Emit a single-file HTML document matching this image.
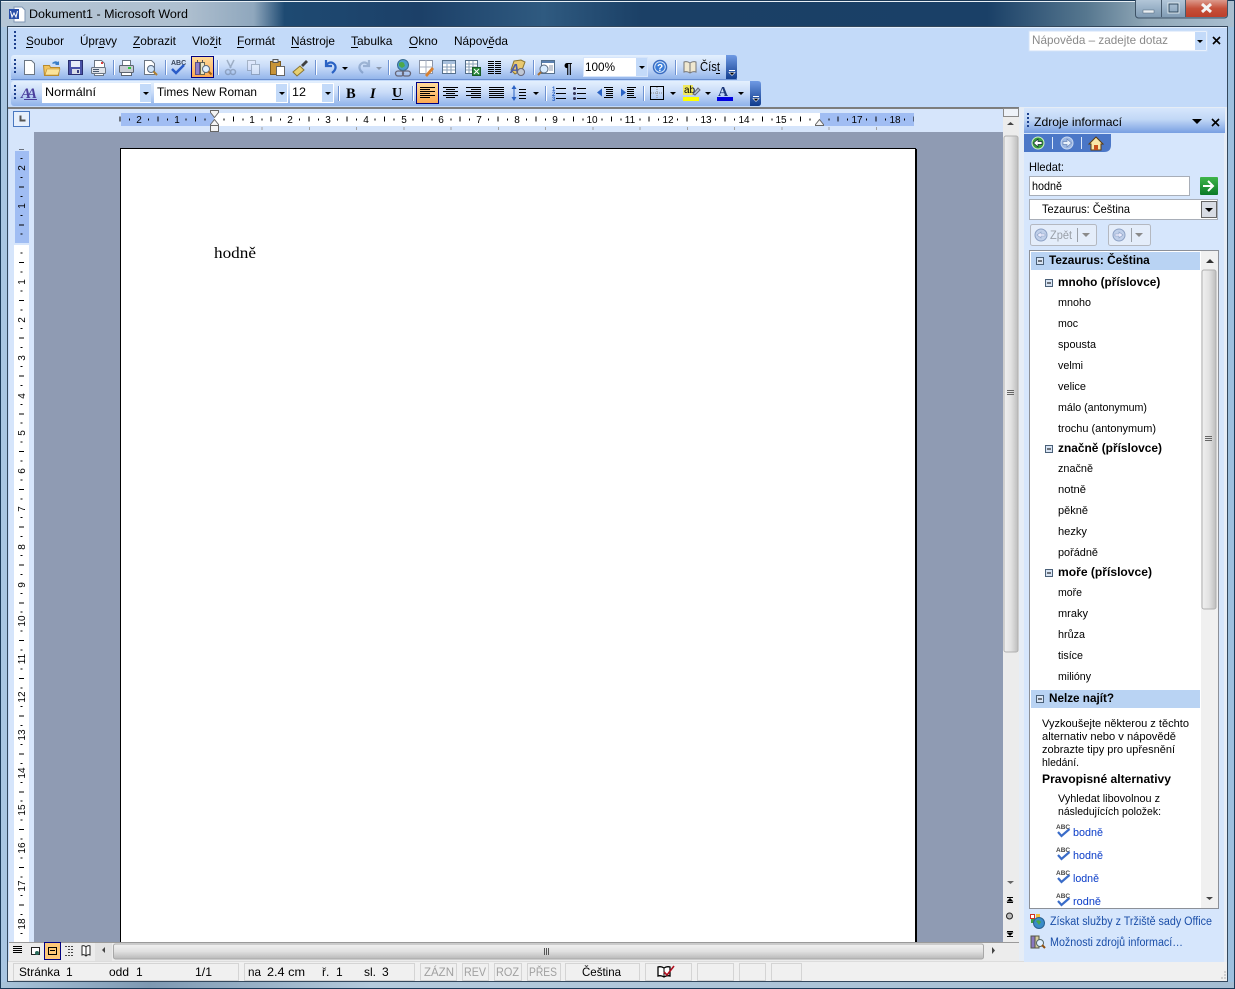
<!DOCTYPE html>
<html lang="cs"><head><meta charset="utf-8"><title>Dokument1 - Microsoft Word</title>
<style>
html,body{margin:0;padding:0;width:1235px;height:989px;overflow:hidden;background:#1a3f66}
svg{display:block}
text{font-family:"Liberation Sans","DejaVu Sans",sans-serif;font-size:12px;fill:#000;white-space:pre}
.b{font-weight:bold}
.l{fill:#0a3cc8}
.m{font-size:10px;text-anchor:middle}
.g{fill:#a0a0a0}
.r{font-size:11px}
.bb{font-weight:bold;font-size:11.800px}
</style></head><body>
<svg xmlns="http://www.w3.org/2000/svg" width="1235" height="989" viewBox="0 0 1235 989">
<defs>
<linearGradient id="tt" x1="0" x2="1" y1="0" y2="0">
<stop offset="0" stop-color="#b5c6d6"/><stop offset=".15" stop-color="#aebfcf"/><stop offset=".205" stop-color="#8fa7bd"/><stop offset=".23" stop-color="#1e4a72"/><stop offset=".34" stop-color="#1c4068"/><stop offset=".44" stop-color="#2f5a80"/><stop offset=".52" stop-color="#1b4066"/><stop offset=".8" stop-color="#1a4067"/><stop offset=".88" stop-color="#56778f"/><stop offset=".93" stop-color="#91a8b8"/><stop offset="1" stop-color="#a9bfd0"/></linearGradient>
<linearGradient id="tb" x1="0" x2="0" y1="0" y2="1"><stop offset="0" stop-color="#e4f0fe"/><stop offset=".45" stop-color="#c9dcf8"/><stop offset="1" stop-color="#90b2ea"/></linearGradient>
<linearGradient id="ch" x1="0" x2="0" y1="0" y2="1"><stop offset="0" stop-color="#6f9ae4"/><stop offset="1" stop-color="#0f3a8c"/></linearGradient>
<linearGradient id="hl" x1="0" x2="0" y1="0" y2="1"><stop offset="0" stop-color="#ffdc9c"/><stop offset="1" stop-color="#fda850"/></linearGradient>
<linearGradient id="tp" x1="0" x2="0" y1="0" y2="1"><stop offset="0" stop-color="#d6e6fc"/><stop offset=".45" stop-color="#c2d8f6"/><stop offset="1" stop-color="#789fe2"/></linearGradient>
<linearGradient id="sv" x1="0" x2="1" y1="0" y2="0"><stop offset="0" stop-color="#f0f0f0"/><stop offset=".5" stop-color="#e2e2e2"/><stop offset="1" stop-color="#bdbdbd"/></linearGradient>
<linearGradient id="sh" x1="0" x2="0" y1="0" y2="1"><stop offset="0" stop-color="#f2f2f2"/><stop offset=".5" stop-color="#e0e0e0"/><stop offset="1" stop-color="#b8b8b8"/></linearGradient>
<linearGradient id="bt" x1="0" x2="0" y1="0" y2="1"><stop offset="0" stop-color="#b8cbdc"/><stop offset=".5" stop-color="#9ab2c8"/><stop offset="1" stop-color="#7f9ab2"/></linearGradient>
<linearGradient id="cl" x1="0" x2="0" y1="0" y2="1"><stop offset="0" stop-color="#dc9a8c"/><stop offset=".5" stop-color="#c5503a"/><stop offset="1" stop-color="#bd3f2a"/></linearGradient>
<linearGradient id="go" x1="0" x2="0" y1="0" y2="1"><stop offset="0" stop-color="#3fb54a"/><stop offset="1" stop-color="#0b7a26"/></linearGradient>
<linearGradient id="bb" x1="0" x2="1" y1="0" y2="0"><stop offset="0" stop-color="#a9c4da"/><stop offset=".12" stop-color="#7e99b2"/><stop offset=".3" stop-color="#b4cadc"/><stop offset="1" stop-color="#a5bed3"/></linearGradient>
</defs>

<!-- window frame -->
<rect width="1235" height="989" fill="#1c3a58"/>
<rect x="1" y="1" width="1233" height="26" fill="url(#tt)"/>
<rect x="1" y="1" width="1134" height="1" fill="#e8f0f6"/>
<rect x="1" y="27" width="7" height="955" fill="#a9c6e2"/>
<rect x="1228" y="27" width="6" height="955" fill="#9dc0df"/>
<rect x="1" y="982" width="1233" height="6" fill="url(#bb)"/>
<rect x="7" y="26" width="1221" height="956" fill="#33475c"/>

<!-- client -->
<rect x="8" y="27" width="1219" height="954" fill="#c3daf9"/>
<rect x="8" y="27" width="1219" height="1" fill="#e2eefc"/>
<rect x="8" y="107" width="1011" height="2" fill="#7d7d7d"/>
<rect x="1019" y="107" width="208" height="855" fill="#e6edf6"/>
<rect x="9" y="109" width="1010" height="834" fill="#d6e5fb"/>

<!-- title text + icon -->
<g transform="translate(9,7)">
<path d="M5 0h8l3 3v12H5z" fill="#fff" stroke="#7f96b4"/><rect x="0" y="2" width="10" height="10" fill="#2a4fa8"/><path d="M1.500 4l1.500 6 2-4 2 4 1.500-6" fill="none" stroke="#fff"/>
</g>
<text x="29" y="18" textLength="159" lengthAdjust="spacingAndGlyphs" style="font-size:12.300px">Dokument1 - Microsoft Word</text>

<!-- window buttons -->
<rect x="1135.500" y="-2" width="92" height="20" rx="3" fill="url(#bt)" stroke="#3e5266"/>
<rect x="1161" y="0" width="1" height="17" fill="#46596c"/>
<rect x="1185" y="0" width="1" height="17" fill="#46596c"/>
<path d="M1186 0h41v15q0 2-3 2h-38z" fill="url(#cl)"/>
<rect x="1143" y="10" width="11" height="3" fill="#e9eef2" stroke="#50657a" stroke-width=".5"/>
<rect x="1169" y="4" width="9" height="8" fill="none" stroke="#2f4a60" stroke-width="1"/><rect x="1168" y="3" width="11" height="10" fill="none" stroke="#dce7ee" stroke-width="1"/>
<path d="M1202 4l9 8M1211 4l-9 8" stroke="#f4f4f4" stroke-width="3"/>

<!-- menu bar -->
<path d="M15 31v2M15 35v2M15 39v2M15 43v2M15 47v2" stroke="#1c3f8c" stroke-width="2"/>
<g>
<text x="26" y="45" textLength="38" lengthAdjust="spacingAndGlyphs">Soubor</text><rect x="26" y="47" width="7" height="1"/>
<text x="80" y="45" textLength="37" lengthAdjust="spacingAndGlyphs">Úpravy</text><rect x="98" y="47" width="6" height="1"/>
<text x="133" y="45" textLength="43" lengthAdjust="spacingAndGlyphs">Zobrazit</text><rect x="133" y="47" width="7" height="1"/>
<text x="192" y="45">Vložit</text><rect x="214" y="47" width="3" height="1"/>
<text x="237" y="45">Formát</text><rect x="237" y="47" width="7" height="1"/>
<text x="291" y="45" textLength="44" lengthAdjust="spacingAndGlyphs">Nástroje</text><rect x="291" y="47" width="8" height="1"/>
<text x="351" y="45">Tabulka</text><rect x="351" y="47" width="7" height="1"/>
<text x="409" y="45">Okno</text><rect x="409" y="47" width="8" height="1"/>
<text x="454" y="45" textLength="54" lengthAdjust="spacingAndGlyphs">Nápověda</text><rect x="487" y="47" width="6" height="1"/>
</g>
<rect x="1029" y="31" width="178" height="20" fill="#fff" stroke="#d2e2f8"/>
<rect x="1195" y="32" width="11" height="18" fill="#c3daf9"/>
<text x="1032" y="44" textLength="136" lengthAdjust="spacingAndGlyphs" style="font-size:11.600px;fill:#8a8a8a">Nápověda – zadejte dotaz</text>
<path d="M1197 40h6l-3 3z"/>
<path d="M1213 37l7 7M1220 37l-7 7" stroke="#000" stroke-width="1.600"/>

<!-- toolbar 1 -->
<rect x="11" y="55" width="726" height="25" rx="3" fill="url(#tb)"/>
<path d="M726 55h8q3 0 3 3v19q0 3-3 3h-8z" fill="url(#ch)"/>
<rect x="729" y="70" width="6" height="1" fill="#fff"/><path d="M729 72.500h6l-3 3z" fill="#000" stroke="#fff" stroke-width=".6"/>
<path d="M15 59v2M15 63v2M15 67v2M15 71v2" stroke="#1c3f8c" stroke-width="2"/>
<rect x="11" y="79" width="726" height="1" fill="#6a8fd0"/>
<!-- toolbar 2 -->
<rect x="11" y="81" width="750" height="25" rx="3" fill="url(#tb)"/>
<path d="M750 81h8q3 0 3 3v19q0 3-3 3h-8z" fill="url(#ch)"/>
<rect x="753" y="96" width="6" height="1" fill="#fff"/><path d="M753 98.500h6l-3 3z" fill="#000" stroke="#fff" stroke-width=".6"/>
<path d="M15 85v2M15 89v2M15 93v2M15 97v2" stroke="#1c3f8c" stroke-width="2"/>

<!-- separators -->
<g fill="#6f93d2">
<rect x="113" y="60" width="1" height="15"/><rect x="165" y="60" width="1" height="15"/><rect x="217" y="60" width="1" height="15"/><rect x="315" y="60" width="1" height="15"/><rect x="388" y="60" width="1" height="15"/><rect x="533" y="60" width="1" height="15"/><rect x="675" y="60" width="1" height="15"/>
<rect x="338" y="86" width="1" height="15"/><rect x="412" y="86" width="1" height="15"/><rect x="545" y="86" width="1" height="15"/><rect x="643" y="86" width="1" height="15"/>
</g>
<g fill="#fff">
<rect x="114" y="60" width="1" height="15"/><rect x="166" y="60" width="1" height="15"/><rect x="218" y="60" width="1" height="15"/><rect x="316" y="60" width="1" height="15"/><rect x="389" y="60" width="1" height="15"/><rect x="534" y="60" width="1" height="15"/><rect x="676" y="60" width="1" height="15"/>
<rect x="339" y="86" width="1" height="15"/><rect x="413" y="86" width="1" height="15"/><rect x="546" y="86" width="1" height="15"/><rect x="644" y="86" width="1" height="15"/>
</g>

<!-- highlighted buttons -->
<rect x="191.500" y="56.500" width="22" height="21" fill="url(#hl)" stroke="#000080"/>
<rect x="416.500" y="82.500" width="22" height="21" fill="url(#hl)" stroke="#000080"/>

<!-- toolbar 1 icons -->
<path d="M24.500 60.500h7l3 3v11h-10z" fill="#fff" stroke="#6b7684"/>
<path d="M44.500 75.500l-1-10h6l1 2h9l-1 8z" fill="#f2c45e" stroke="#b98a2d"/><path d="M45 75l2-6h13l-2 6z" fill="#fbe39a" stroke="#b98a2d" stroke-width=".6"/><path d="M52 63q3-3 6-1l1-1v4h-4l1-1q-2-1-3 0" fill="#3a7ec8"/>
<rect x="68.500" y="60.500" width="14" height="14" fill="#4a52a8" stroke="#2a2f70"/><rect x="71" y="61" width="9" height="6" fill="#e8ecf8"/><rect x="72" y="69" width="8" height="5" fill="#d8dce8"/><rect x="77" y="70" width="2" height="3" fill="#3a3f80"/>
<path d="M94.500 60.500h7l3 3v4h-10z" fill="#fff" stroke="#6b7684"/><rect x="91.500" y="67.500" width="14" height="6" rx="1" fill="#dfe3ea" stroke="#6b7684"/><rect x="94.500" y="73.500" width="9" height="2" fill="#fff" stroke="#6b7684"/><rect x="101" y="62" width="2" height="2" fill="#d84040"/><rect x="93" y="69" width="6" height="1" fill="#4a5a70"/><rect x="93" y="71" width="6" height="1" fill="#4a5a70"/>
<path d="M122.500 60.500h8v5h-8z" fill="#fff" stroke="#6b7684"/><rect x="119.500" y="65.500" width="14" height="7" rx="1" fill="#c8ccd4" stroke="#5c6470"/><rect x="121.500" y="72.500" width="10" height="3" fill="#fff" stroke="#5c6470"/><rect x="128" y="67" width="3" height="2" fill="#2cc83c"/>
<path d="M144.500 60.500h7l3 3v11h-10z" fill="#fff" stroke="#6b7684"/><circle cx="151" cy="69" r="3.500" fill="#d0e4f8" stroke="#5a6a80"/><path d="M153.500 71.500l3.500 3.500" stroke="#b08030" stroke-width="2"/>
<text x="171" y="65" style="font-size:7px;font-weight:bold;fill:#39465c">ABC</text>
<path d="M172 69l4 4 8-8" fill="none" stroke="#2a5cc8" stroke-width="2.500"/>
<rect x="195.500" y="62.500" width="4" height="12" fill="#8f7fc8" stroke="#5a4e90"/><rect x="200.500" y="62.500" width="4" height="12" fill="#e8e4c8" stroke="#6a6a50"/><circle cx="206" cy="69" r="3.500" fill="#e0f0ff" stroke="#5a6a80"/><path d="M208.500 71.500l3 3" stroke="#a86010" stroke-width="2"/><rect x="197" y="60" width="1" height="3" fill="#555"/><rect x="202" y="60" width="1" height="3" fill="#555"/>
<g opacity=".42">
<path d="M227 60l4 8M234 60l-4 8" stroke="#5a6a80" stroke-width="1.500"/><circle cx="228" cy="72" r="2.500" fill="none" stroke="#5a6a80" stroke-width="1.500"/><circle cx="233" cy="72" r="2.500" fill="none" stroke="#5a6a80" stroke-width="1.500"/>
<rect x="247.500" y="60.500" width="8" height="10" fill="#eef" stroke="#6b7684"/><rect x="251.500" y="64.500" width="8" height="10" fill="#fff" stroke="#6b7684"/>
</g>
<rect x="270.500" y="61.500" width="10" height="13" fill="#c89438" stroke="#7a5a20"/><rect x="273" y="59.500" width="5" height="3" fill="#e8e8e8" stroke="#555"/><rect x="276.500" y="66.500" width="8" height="9" fill="#fff" stroke="#666"/>
<path d="M293 72l7-6 4 4-7 6z" fill="#e8d070" stroke="#8a7430"/><path d="M301 65l5-5 2 2-5 5z" fill="#404040"/>
<path d="M326 60v6h6M326 65q5-5 9 0q2 4-3 8" fill="none" stroke="#2a62c4" stroke-width="2.200"/>
<path d="M342 67h6l-3 3z"/>
<g opacity=".38"><path d="M369 60v6h-6M369 65q-5-5-9 0q-2 4 3 8" fill="none" stroke="#4a6a98" stroke-width="2.200"/><path d="M376 67h6l-3 3z" fill="#333"/></g>
<circle cx="403" cy="65" r="5.500" fill="#4a9ccc" stroke="#3a6c90"/><path d="M399 63q3-2 5 0l1 3-3 2-3-2z" fill="#4ea848"/><path d="M398 71h3a2.500 2.500 0 010 5h-3a2.500 2.500 0 010-5zM405 71h3a2.500 2.500 0 010 5h-3a2.500 2.500 0 010-5z" fill="none" stroke="#667" stroke-width="1.300"/>
<rect x="419.500" y="60.500" width="13" height="13" fill="#fff" stroke="#8a94a8"/><path d="M426 60v14M420 67h13" stroke="#a8b0c0"/><path d="M425 75l7-8 2 2-7 8z" fill="#d88030"/>
<rect x="442.500" y="60.500" width="13" height="13" fill="#fff" stroke="#55708c"/><rect x="443" y="61" width="12" height="3" fill="#a8c0dc"/><path d="M447 64v9M451 64v9M443 67h12M443 70h12" stroke="#8aa0b8"/>
<rect x="465.500" y="60.500" width="12" height="13" fill="#fff" stroke="#55708c"/><path d="M469 61v12M473 61v12M466 64h11M466 67h11M466 70h11" stroke="#8aa0b8"/><rect x="472.500" y="67.500" width="8" height="8" fill="#2a8a3c" stroke="#1a5c28"/><path d="M474 69l5 5M479 69l-5 5" stroke="#fff"/>
<path d="M488 61.500h6M488 63.500h6M488 65.500h6M488 67.500h6M488 69.500h6M488 71.500h6M488 73.500h6M495 61.500h6M495 63.500h6M495 65.500h6M495 67.500h6M495 69.500h6M495 71.500h6M495 73.500h6" stroke="#000" shape-rendering="crispEdges"/>
<path d="M514 61l7-1 4 2-3 8-7 4-4-4z" fill="#e8c870" stroke="#8a7430"/><text x="510" y="73" style="font-size:13px;font-weight:bold;font-style:italic;fill:#4a5ca8">A</text><circle cx="521" cy="72" r="3.500" fill="#c0c8d4" stroke="#667"/>
<rect x="541.500" y="60.500" width="13" height="13" fill="#fff" stroke="#55708c"/><rect x="542" y="61" width="12" height="2" fill="#5a80b0"/><circle cx="544" cy="69" r="4" fill="#d8ecff" stroke="#5a6a80"/><path d="M541 72l-3 3" stroke="#a87030" stroke-width="2"/><path d="M549 66h4M549 68h4M549 70h4" stroke="#8a94a8"/>
<text x="564" y="73" style="font-size:15px;font-weight:bold">¶</text>
<!-- zoom combo -->
<rect x="583.500" y="57.500" width="64" height="19" fill="#fff" stroke="#d6e5fb"/>
<rect x="636" y="58" width="11" height="18" fill="#c3daf9"/>
<text x="585" y="71" textLength="30" lengthAdjust="spacingAndGlyphs" style="font-size:12px">100%</text>
<path d="M639 66h6l-3 3z"/>
<circle cx="660" cy="67" r="6.500" fill="#d8e8fc" stroke="#3a6cc0" stroke-width="1.500"/><circle cx="660" cy="67" r="4.800" fill="#3a7cd8"/><text x="660" y="71" text-anchor="middle" style="font-size:10px;font-weight:bold;fill:#fff">?</text>
<path d="M684 62q3-1 6 1q3-2 6-1v10q-3-1-6 1q-3-2-6-1z" fill="#f0e8d0" stroke="#777"/><path d="M690 63v10" stroke="#777"/>
<text x="700" y="71" textLength="20" lengthAdjust="spacingAndGlyphs" style="font-size:12.500px">Číst</text><rect x="716" y="73" width="4" height="1"/>

<!-- toolbar 2 -->
<text x="21" y="98" style="font-size:15px;font-family:'Liberation Serif',serif;font-style:italic;fill:#4a3e9c;font-weight:bold">A</text>
<text x="27" y="98" style="font-size:15px;font-family:'Liberation Serif',serif;font-style:italic;fill:#4a3e9c;font-weight:bold">A</text>
<rect x="24" y="99" width="13" height="1" fill="#4a3e9c"/>
<rect x="42" y="83" width="109" height="20" fill="#fff"/><rect x="140" y="84" width="11" height="18" fill="#c3daf9"/>
<rect x="154" y="83" width="134" height="20" fill="#fff"/><rect x="276" y="84" width="11" height="18" fill="#c3daf9"/>
<rect x="290" y="83" width="44" height="20" fill="#fff"/><rect x="322" y="84" width="11" height="18" fill="#c3daf9"/>
<text x="45" y="96" textLength="51" lengthAdjust="spacingAndGlyphs">Normální</text>
<text x="157" y="96" textLength="100" lengthAdjust="spacingAndGlyphs">Times New Roman</text>
<text x="292" y="96" textLength="14" lengthAdjust="spacingAndGlyphs">12</text>
<path d="M143 92h6l-3 3z"/><path d="M279 92h6l-3 3z"/><path d="M325 92h6l-3 3z"/>
<text x="346" y="98" style="font-size:14.500px;font-weight:bold;font-family:'Liberation Serif',serif">B</text>
<text x="370" y="98" style="font-size:14.500px;font-weight:bold;font-style:italic;font-family:'Liberation Serif',serif">I</text>
<text x="392" y="97" style="font-size:14px;font-weight:bold;font-family:'Liberation Serif',serif">U</text><rect x="392" y="99" width="11" height="1"/>
<g stroke="#000" shape-rendering="crispEdges">
<path d="M420 87.500h15M420 89.500h10M420 91.500h15M420 93.500h10M420 95.500h15M420 97.500h10"/>
<path d="M443 87.500h15M446 89.500h9M443 91.500h15M446 93.500h9M443 95.500h15M446 97.500h9"/>
<path d="M466 87.500h15M471 89.500h10M466 91.500h15M471 93.500h10M466 95.500h15M471 97.500h10"/>
<path d="M489 87.500h15M489 89.500h15M489 91.500h15M489 93.500h15M489 95.500h15M489 97.500h15"/>
<path d="M519 89.500h7M519 92.500h7M519 95.500h7M519 98.500h7"/>
<path d="M556 88.500h10M556 93.500h10M556 98.500h10"/>
<path d="M577 88.500h9M577 93.500h9M577 98.500h9"/>
<path d="M604 87.500h9M606 89.500h7M606 91.500h7M606 93.500h7M606 95.500h7M604 97.500h9"/>
<path d="M627 87.500h9M627 89.500h7M627 91.500h7M627 93.500h7M627 95.500h7M627 97.500h9"/>
</g>
<path d="M514 85l-2.500 4h5zM514 101l-2.500-4h5z" fill="#2a62c4"/><rect x="513.500" y="88" width="1" height="10" fill="#2a62c4"/>
<path d="M533 92h6l-3 3z"/>
<text x="552" y="91" style="font-size:6px;fill:#2a62c4;font-weight:bold">1</text><text x="552" y="96" style="font-size:6px;fill:#2a62c4;font-weight:bold">2</text><text x="552" y="101" style="font-size:6px;fill:#2a62c4;font-weight:bold">3</text>
<circle cx="574.500" cy="88.500" r="1.500" fill="#335"/><circle cx="574.500" cy="93.500" r="1.500" fill="#335"/><circle cx="574.500" cy="98.500" r="1.500" fill="#335"/>
<path d="M597 92.500l5-4v8z" fill="#2a62c4"/><path d="M626 92.500l-5-4v8z" fill="#2a62c4"/>
<rect x="650.500" y="86.500" width="13" height="13" fill="none" stroke="#000"/><path d="M657 87v12M651 93h12" stroke="#8a8a8a" stroke-dasharray="1 1"/>
<path d="M670 92h6l-3 3z"/>
<rect x="683" y="97" width="16" height="4" fill="#ffff00"/><rect x="683" y="85" width="10" height="10" fill="#f0e860"/><text x="684" y="93" style="font-size:10px">ab</text><path d="M693 94l5-6 2 2-5 5z" fill="#b8c8d8" stroke="#667"/>
<path d="M705 92h6l-3 3z"/>
<rect x="717" y="97" width="16" height="4" fill="#0000e0"/><text x="718" y="96" style="font-size:14px;font-weight:bold;fill:#1f3a7a;font-family:'Liberation Serif',serif">A</text>
<path d="M738 92h6l-3 3z"/>

<!-- tab selector + rulers -->
<rect x="13.500" y="111.500" width="16" height="15" fill="#e6effc" stroke="#4a78c0"/>
<path d="M20 116v5h5v-1h-4v-4z" fill="#555" stroke="#555"/>
<rect x="121" y="113" width="793" height="13" fill="#a0bdf3"/>
<rect x="214" y="113" width="606" height="13" fill="#fff"/>
<g stroke="#000" fill="none" shape-rendering="crispEdges">
<line x1="119.500" y1="119" x2="914" y2="119" stroke-dasharray="1 36.800" stroke-width="5"/>
<line x1="129" y1="119.500" x2="914" y2="119.500" stroke-dasharray="1 17.900" stroke-width="2"/>
</g>
<g stroke="#a0a0a0" shape-rendering="crispEdges"><line x1="261.500" y1="128.500" x2="880" y2="128.500" stroke-dasharray="1 46.250" stroke-width="3"/></g>
<g>
<text class="m" x="139" y="123">2</text><text class="m" x="177" y="123">1</text><text class="m" x="252" y="123">1</text><text class="m" x="290" y="123">2</text><text class="m" x="328" y="123">3</text><text class="m" x="366" y="123">4</text><text class="m" x="404" y="123">5</text><text class="m" x="441" y="123">6</text><text class="m" x="479" y="123">7</text><text class="m" x="517" y="123">8</text><text class="m" x="555" y="123">9</text><text class="m" x="592" y="123">10</text><text class="m" x="630" y="123">11</text><text class="m" x="668" y="123">12</text><text class="m" x="706" y="123">13</text><text class="m" x="744" y="123">14</text><text class="m" x="781" y="123">15</text><text class="m" x="857" y="123">17</text><text class="m" x="895" y="123">18</text>
</g>
<!-- indent markers -->
<path d="M210.500 110.500h8v2l-4 5-4-5z" fill="#f4f4f4" stroke="#666"/><path d="M210.500 124.500l4-5 4 5v1h-8z" fill="#f4f4f4" stroke="#666"/><rect x="210.500" y="125.500" width="8" height="6" fill="#f4f4f4" stroke="#666"/>
<path d="M815.500 125.500v-1l4-5 4 5v1z" fill="#f4f4f4" stroke="#666"/>

<!-- doc area -->
<rect x="34" y="132" width="969" height="811" fill="#8f9bb3"/>
<rect x="120.500" y="148.500" width="795" height="800" fill="#fff" stroke="#000"/>
<rect x="916" y="149" width="1" height="794" fill="#000"/>
<text x="214" y="258" textLength="42" lengthAdjust="spacingAndGlyphs" style="font-family:'Liberation Serif',serif;font-size:16px">hodně</text>

<!-- vertical ruler -->
<rect x="15" y="151" width="14" height="92" fill="#a0bdf3"/>
<rect x="14" y="245" width="15" height="698" fill="#fff"/>
<g stroke="#000" fill="none" shape-rendering="crispEdges">
<line x1="21.500" y1="149" x2="21.500" y2="943" stroke-dasharray="1 17.900" stroke-width="2" stroke-dashoffset="-28"/>
<line x1="21.500" y1="149" x2="21.500" y2="943" stroke-dasharray="1 36.800" stroke-width="5" stroke-dashoffset="-37.500"/>
</g>
<g fill="#fff">
<rect x="15" y="613" width="13" height="16"/><rect x="15" y="651" width="13" height="16"/><rect x="15" y="689" width="13" height="16"/><rect x="15" y="727" width="13" height="16"/><rect x="15" y="765" width="13" height="16"/><rect x="15" y="802" width="13" height="16"/><rect x="15" y="840" width="13" height="16"/><rect x="15" y="878" width="13" height="16"/><rect x="15" y="916" width="13" height="16"/>
</g>
<g>
<text class="m" transform="translate(25,168) rotate(-90)">2</text><text class="m" transform="translate(25,206) rotate(-90)">1</text><text class="m" transform="translate(25,282) rotate(-90)">1</text><text class="m" transform="translate(25,320) rotate(-90)">2</text><text class="m" transform="translate(25,358) rotate(-90)">3</text><text class="m" transform="translate(25,396) rotate(-90)">4</text><text class="m" transform="translate(25,433) rotate(-90)">5</text><text class="m" transform="translate(25,471) rotate(-90)">6</text><text class="m" transform="translate(25,509) rotate(-90)">7</text><text class="m" transform="translate(25,547) rotate(-90)">8</text><text class="m" transform="translate(25,585) rotate(-90)">9</text><text class="m" transform="translate(25,621) rotate(-90)">10</text><text class="m" transform="translate(25,659) rotate(-90)">11</text><text class="m" transform="translate(25,697) rotate(-90)">12</text><text class="m" transform="translate(25,735) rotate(-90)">13</text><text class="m" transform="translate(25,773) rotate(-90)">14</text><text class="m" transform="translate(25,810) rotate(-90)">15</text><text class="m" transform="translate(25,848) rotate(-90)">16</text><text class="m" transform="translate(25,886) rotate(-90)">17</text><text class="m" transform="translate(25,924) rotate(-90)">18</text>
</g>

<!-- vertical scrollbar -->
<rect x="1003" y="109" width="16" height="834" fill="#ececec"/>
<rect x="1003.500" y="108.500" width="15" height="8" fill="#eef2f8" stroke="#8a8a8a"/>
<path d="M1007 125h7l-3.500-3z" fill="#444"/>
<rect x="1004" y="136" width="14" height="516" rx="2" fill="url(#sv)" stroke="#b0b0b0"/>
<path d="M1007 390.500h7M1007 392.500h7M1007 394.500h7" stroke="#666"/>
<path d="M1007 881h7l-3.500 3z" fill="#666"/>
<rect x="1007" y="897" width="6" height="1"/><path d="M1006.500 901.500h7l-3.500-3.500z"/><rect x="1007" y="902" width="6" height="1"/>
<circle cx="1009.500" cy="916" r="3" fill="#bbb" stroke="#222"/>
<rect x="1007" y="931" width="6" height="1"/><path d="M1006.500 932.500h7l-3.500 3.500z"/><rect x="1007" y="936" width="6" height="1"/>

<!-- bottom hscroll + view -->
<rect x="9" y="943" width="1010" height="19" fill="#ececec"/>
<rect x="9" y="942" width="1010" height="1" fill="#9a9a9a"/>
<path d="M13 946.500h9M13 948.500h9M13 950.500h9M13 952.500h9" stroke="#000" shape-rendering="crispEdges"/>
<rect x="31.500" y="947.500" width="8" height="7" fill="#fff" stroke="#222"/><circle cx="37" cy="953" r="2" fill="#2a6c5c"/>
<rect x="44.500" y="942.500" width="16" height="17" fill="#fdc878" stroke="#000080"/>
<rect x="48.500" y="947.500" width="8" height="7" fill="none" stroke="#000"/><rect x="50" y="950" width="5" height="1"/>
<path d="M65 946.500h9M68 949.500h6M68 952.500h6M65 955.500h9" stroke="#444" stroke-dasharray="2 1"/>
<path d="M82 946q2-1 4 1q2-2 4-1v9q-2-1-4 1q-2-2-4-1z" fill="#fff" stroke="#222"/><path d="M86 947v9" stroke="#222"/>
<rect x="95" y="943" width="17" height="18" fill="#e2e2e2"/>
<path d="M105 947v6l-3-3z" fill="#444"/>
<rect x="113.500" y="944" width="870" height="15" rx="2" fill="url(#sh)" stroke="#a8a8a8"/>
<path d="M544.500 948v7M546.500 948v7M548.500 948v7" stroke="#555"/>
<path d="M992 947v7l3-3.500z" fill="#444"/>

<!-- task pane -->
<rect x="1024" y="108" width="200" height="854" fill="#d6e6fc"/>
<rect x="1024" y="108" width="201" height="25" fill="url(#tp)"/>
<path d="M1028 113v2M1028 117v2M1028 121v2M1028 125v2" stroke="#1c3f8c" stroke-width="2"/>
<text x="1034" y="126" textLength="88" lengthAdjust="spacingAndGlyphs">Zdroje informací</text>
<path d="M1192 119h10l-5 5z"/>
<path d="M1212 119l7 7M1219 119l-7 7" stroke="#000" stroke-width="1.600"/>
<path d="M1024 134h87v11q0 7-7 7h-80z" fill="#4b77c7"/>
<circle cx="1038" cy="143" r="6" fill="#3ca03c" stroke="#d4f0c8"/><path d="M1033.500 143l4.500-4v2.500h4v3h-4v2.500z" fill="#fff" stroke="#123" stroke-width=".7"/>
<rect x="1052" y="137" width="1" height="12" fill="#dbe8fa"/>
<circle cx="1067" cy="143" r="6" fill="#9db7e2" stroke="#c8d8f0"/><path d="M1071.500 143l-4.500-4v2.500h-4v3h4v2.500z" fill="#e8f0fa" stroke="#6a86b8" stroke-width=".7"/>
<rect x="1081" y="137" width="1" height="12" fill="#dbe8fa"/>
<path d="M1089 144l7-7 7 7h-2v6h-10v-6z" fill="#f8e6a8" stroke="#5c3c10"/><rect x="1094" y="145" width="4" height="5" fill="#c8501c"/>

<text x="1029" y="171" textLength="35" lengthAdjust="spacingAndGlyphs">Hledat:</text>
<rect x="1029.500" y="176.500" width="160" height="19" fill="#fff" stroke="#a8aeb8"/>
<text x="1032" y="190" textLength="30" lengthAdjust="spacingAndGlyphs">hodně</text>
<rect x="1200" y="177" width="18" height="18" rx="1" fill="url(#go)"/>
<path d="M1203 186h9M1208 181l5 5-5 5" fill="none" stroke="#fff" stroke-width="2"/>
<rect x="1029.500" y="199.500" width="188" height="20" fill="#fff" stroke="#a8aeb8"/>
<text x="1042" y="213" textLength="88" lengthAdjust="spacingAndGlyphs">Tezaurus: Čeština</text>
<rect x="1201.500" y="201.500" width="15" height="16" fill="#d8dce4" stroke="#666"/>
<path d="M1205 208h8l-4 4z"/>
<rect x="1030.500" y="224.500" width="66" height="21" rx="2" fill="#e4edfa" stroke="#b4b8c0"/>
<rect x="1108.500" y="224.500" width="42" height="21" rx="2" fill="#e4edfa" stroke="#b4b8c0"/>
<circle cx="1041" cy="235" r="6" fill="#c0d0ea" stroke="#8ca0c4"/><path d="M1037 235l4-3v2h4v2h-4v2z" fill="#eef" stroke="#8ca0c4" stroke-width=".6"/>
<text x="1050" y="239" textLength="22" lengthAdjust="spacingAndGlyphs" style="fill:#9aa0a8">Zpět</text>
<rect x="1077" y="228" width="1" height="14" fill="#9aa0a8"/><path d="M1082 233h8l-4 4z" fill="#8a8a8a"/>
<circle cx="1119" cy="235" r="6" fill="#c0d0ea" stroke="#8ca0c4"/><path d="M1123 235l-4-3v2h-4v2h4v2z" fill="#eef" stroke="#8ca0c4" stroke-width=".6"/>
<rect x="1131" y="228" width="1" height="14" fill="#9aa0a8"/><path d="M1135 233h8l-4 4z" fill="#8a8a8a"/>

<!-- results -->
<rect x="1029.500" y="250.500" width="189" height="658" fill="#fff" stroke="#8c9098"/>
<rect x="1031" y="252" width="169" height="18" fill="#b9d3f3"/>
<rect x="1031" y="690" width="169" height="18" fill="#b9d3f3"/>
<rect x="1201" y="251" width="17" height="657" fill="#f0f0f0"/>
<path d="M1206 263h8l-4-4z" fill="#333"/>
<rect x="1202" y="270" width="14" height="339" rx="2" fill="url(#sv)" stroke="#b0b0b0"/>
<path d="M1205 436.500h7M1205 438.500h7M1205 440.500h7" stroke="#666"/>
<path d="M1206 897h7l-3.500 3z" fill="#444"/>

<g fill="#d8e4f4" stroke="#4a6078">
<rect x="1036.500" y="257.500" width="7" height="7"/><rect x="1045.500" y="279.500" width="7" height="7"/><rect x="1045.500" y="445.500" width="7" height="7"/><rect x="1045.500" y="569.500" width="7" height="7"/><rect x="1036.500" y="695.500" width="7" height="7"/>
</g>
<path d="M1038 261h4M1047 283h4M1047 449h4M1047 573h4M1038 699h4" stroke="#000"/>
<g>
<text class="bb" x="1049" y="264">Tezaurus: Čeština</text>
<text class="bb" x="1058" y="286">mnoho (příslovce)</text>
<text class="r" x="1058" y="306" textLength="33" lengthAdjust="spacingAndGlyphs">mnoho</text>
<text class="r" x="1058" y="327" textLength="20" lengthAdjust="spacingAndGlyphs">moc</text>
<text class="r" x="1058" y="348" textLength="38" lengthAdjust="spacingAndGlyphs">spousta</text>
<text class="r" x="1058" y="369" textLength="25" lengthAdjust="spacingAndGlyphs">velmi</text>
<text class="r" x="1058" y="390" textLength="28" lengthAdjust="spacingAndGlyphs">velice</text>
<text class="r" x="1058" y="411" textLength="89" lengthAdjust="spacingAndGlyphs">málo (antonymum)</text>
<text class="r" x="1058" y="432" textLength="98" lengthAdjust="spacingAndGlyphs">trochu (antonymum)</text>
<text class="bb" x="1058" y="452" textLength="104" lengthAdjust="spacingAndGlyphs">značně (příslovce)</text>
<text class="r" x="1058" y="472" textLength="35" lengthAdjust="spacingAndGlyphs">značně</text>
<text class="r" x="1058" y="493" textLength="28" lengthAdjust="spacingAndGlyphs">notně</text>
<text class="r" x="1058" y="514" textLength="30" lengthAdjust="spacingAndGlyphs">pěkně</text>
<text class="r" x="1058" y="535" textLength="29" lengthAdjust="spacingAndGlyphs">hezky</text>
<text class="r" x="1058" y="556" textLength="40" lengthAdjust="spacingAndGlyphs">pořádně</text>
<text class="bb" x="1058" y="576" textLength="94" lengthAdjust="spacingAndGlyphs">moře (příslovce)</text>
<text class="r" x="1058" y="596" textLength="24" lengthAdjust="spacingAndGlyphs">moře</text>
<text class="r" x="1058" y="617" textLength="30" lengthAdjust="spacingAndGlyphs">mraky</text>
<text class="r" x="1058" y="638" textLength="27" lengthAdjust="spacingAndGlyphs">hrůza</text>
<text class="r" x="1058" y="659" textLength="25" lengthAdjust="spacingAndGlyphs">tisíce</text>
<text class="r" x="1058" y="680" textLength="33" lengthAdjust="spacingAndGlyphs">milióny</text>
<text class="bb" x="1049" y="702" textLength="65" lengthAdjust="spacingAndGlyphs">Nelze najít?</text>
<text class="r" x="1042" y="727" textLength="147" lengthAdjust="spacingAndGlyphs">Vyzkoušejte některou z těchto</text>
<text class="r" x="1042" y="740" textLength="134" lengthAdjust="spacingAndGlyphs">alternativ nebo v nápovědě</text>
<text class="r" x="1042" y="753" textLength="133" lengthAdjust="spacingAndGlyphs">zobrazte tipy pro upřesnění</text>
<text class="r" x="1042" y="766" textLength="37" lengthAdjust="spacingAndGlyphs">hledání.</text>
<text class="bb" x="1042" y="783" textLength="129" lengthAdjust="spacingAndGlyphs">Pravopisné alternativy</text>
<text class="r" x="1058" y="802" textLength="102" lengthAdjust="spacingAndGlyphs">Vyhledat libovolnou z</text>
<text class="r" x="1058" y="815" textLength="103" lengthAdjust="spacingAndGlyphs">následujících položek:</text>
<text class="r l" x="1073" y="836" textLength="30" lengthAdjust="spacingAndGlyphs">bodně</text>
<text class="r l" x="1073" y="859" textLength="30" lengthAdjust="spacingAndGlyphs">hodně</text>
<text class="r l" x="1073" y="882" textLength="26" lengthAdjust="spacingAndGlyphs">lodně</text>
<text class="r l" x="1073" y="905" textLength="28" lengthAdjust="spacingAndGlyphs">rodně</text>
</g>
<g>
<text x="1056" y="829" style="font-size:6.500px;font-weight:bold;fill:#444">ABC</text><path d="M1058 832l3.500 4 8-7" fill="none" stroke="#3a6cc8" stroke-width="2.200"/>
<text x="1056" y="852" style="font-size:6.500px;font-weight:bold;fill:#444">ABC</text><path d="M1058 855l3.500 4 8-7" fill="none" stroke="#3a6cc8" stroke-width="2.200"/>
<text x="1056" y="875" style="font-size:6.500px;font-weight:bold;fill:#444">ABC</text><path d="M1058 878l3.500 4 8-7" fill="none" stroke="#3a6cc8" stroke-width="2.200"/>
<text x="1056" y="898" style="font-size:6.500px;font-weight:bold;fill:#444">ABC</text><path d="M1058 901l3.500 4 8-7" fill="none" stroke="#3a6cc8" stroke-width="2.200"/>
</g>

<!-- pane footer -->
<rect x="1030.500" y="914.500" width="4" height="4" fill="#fff" stroke="#d03020"/><rect x="1036" y="914" width="4" height="4" fill="#f0c040"/><rect x="1031" y="919" width="4" height="4" fill="#40a040"/><circle cx="1039" cy="923" r="5.500" fill="#3a8cc8" stroke="#2a6090"/>
<path d="M1036 921q3-2 5 1l-2 3z" fill="#48a848"/>
<text x="1050" y="925" textLength="162" lengthAdjust="spacingAndGlyphs" style="font-size:11.500px;fill:#1a4ea8">Získat služby z Tržiště sady Office</text>
<rect x="1031" y="936" width="4" height="12" fill="#8878c0" stroke="#554"/><rect x="1035" y="936" width="4" height="12" fill="#d8d0a0" stroke="#554"/><circle cx="1040" cy="943" r="3.500" fill="#e0f0ff" stroke="#566"/><path d="M1042 945l3 3" stroke="#905010" stroke-width="2"/>
<text x="1050" y="946" textLength="133" lengthAdjust="spacingAndGlyphs" style="font-size:11.500px;fill:#1a4ea8">Možnosti zdrojů informací…</text>

<!-- status bar -->
<rect x="8" y="962" width="1219" height="19" fill="#f0f0f0"/>
<rect x="8" y="961" width="1016" height="1" fill="#dcdcdc"/>
<g fill="#f0f0f0" stroke="#d4d4d4">
<rect x="13.500" y="963.500" width="225" height="17"/><rect x="244.500" y="963.500" width="170" height="17"/><rect x="420.500" y="963.500" width="36" height="17"/><rect x="462.500" y="963.500" width="26" height="17"/><rect x="494.500" y="963.500" width="27" height="17"/><rect x="527.500" y="963.500" width="33" height="17"/><rect x="565.500" y="963.500" width="74" height="17"/><rect x="645.500" y="963.500" width="46" height="17"/><rect x="697.500" y="963.500" width="36" height="17"/><rect x="739.500" y="963.500" width="26" height="17"/><rect x="771.500" y="963.500" width="30" height="17"/>
</g>
<g>
<text x="19" y="976" textLength="41" lengthAdjust="spacingAndGlyphs">Stránka</text><text x="66" y="976">1</text>
<text x="109" y="976" textLength="20" lengthAdjust="spacingAndGlyphs">odd</text><text x="136" y="976">1</text>
<text x="195" y="976" textLength="17" lengthAdjust="spacingAndGlyphs">1/1</text>
<text x="248" y="976" textLength="13" lengthAdjust="spacingAndGlyphs">na</text><text x="267" y="976" textLength="38" lengthAdjust="spacingAndGlyphs">2.4 cm</text>
<text x="322" y="976">ř.</text><text x="336" y="976">1</text>
<text x="364" y="976">sl.</text><text x="382" y="976">3</text>
<text class="g" x="424" y="976" textLength="30" lengthAdjust="spacingAndGlyphs">ZÁZN</text><text class="g" x="464" y="976" textLength="22" lengthAdjust="spacingAndGlyphs">REV</text><text class="g" x="496" y="976" textLength="23" lengthAdjust="spacingAndGlyphs">ROZ</text><text class="g" x="529" y="976" textLength="28" lengthAdjust="spacingAndGlyphs">PŘES</text>
<text x="582" y="976" textLength="39" lengthAdjust="spacingAndGlyphs">Čeština</text>
</g>
<path d="M658 967q3-1 6 1q3-2 6-1v9q-3-1-6 1q-3-2-6-1z" fill="#fff" stroke="#000" stroke-width="1.300"/><path d="M664 968v9" stroke="#000"/><path d="M664 972l3 3 7-9" fill="none" stroke="#b01020" stroke-width="1.600"/>
<path d="M1224 978h2M1221 978h2M1224 975h2M1224 972h2" stroke="#b0b0b0"/>
</svg>
</body></html>
